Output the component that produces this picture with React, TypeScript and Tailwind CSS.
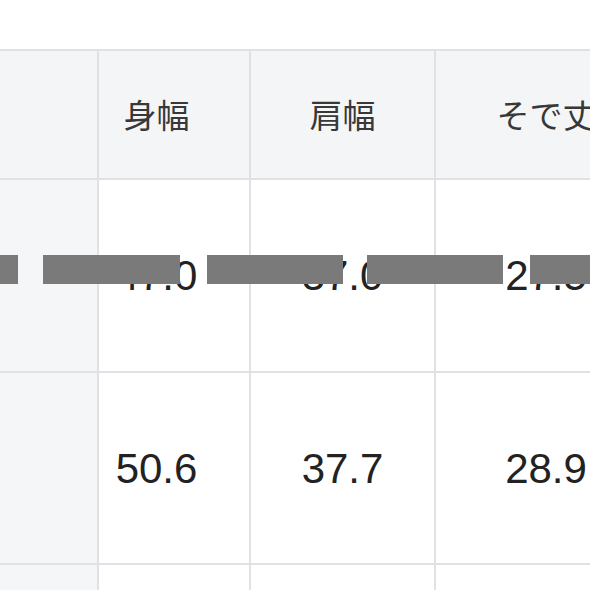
const headers = ["", "身幅", "肩幅", "そで丈"];
const rows = [
  { h: "h-[193px]", values: ["47.0", "37.0", "27.5"] },
  { h: "h-[192px]", values: ["50.6", "37.7", "28.9"] },
  { h: "h-[100px]", values: ["", "", ""] },
];

const cols = ["w-[99px]", "w-[152px]", "w-[185px]", "w-[222px]"];
const pads = ["", "pr-[35px]", "", ""];

// redaction bars over the first data row
const bars = [
  "left-0 w-[18px]",
  "left-[43px] w-[137px]",
  "left-[207px] w-[136px]",
  "left-[367px] w-[136px]",
  "left-[530px] w-[70px]",
];

export default function App() {
  return (
    <div className="relative h-[590px] w-[590px] overflow-hidden bg-white pt-[49px]">
      <div className="flex w-[658px] flex-col border-t-2 border-[#dfe1e4]">
        <div className="flex">
          {headers.map((t, i) => (
            <div
              key={i}
              className={`${cols[i]} ${pads[i]} flex h-[129px] shrink-0 items-center justify-center border-r-2 border-b-2 border-[#dfe1e4] bg-[#f4f5f7] text-[33px] text-[#383838] [font-family:'Noto_Sans_CJK_JP',sans-serif]`}
            >
              {t}
            </div>
          ))}
        </div>
        {rows.map((r, ri) => (
          <div key={ri} className="flex">
            <div
              className={`${cols[0]} ${r.h} shrink-0 border-r-2 border-b-2 border-[#dfe1e4] bg-[#f5f6f8]`}
            />
            {r.values.map((v, i) => (
              <div
                key={i}
                className={`${cols[i + 1]} ${pads[i + 1]} ${r.h} flex shrink-0 items-center justify-center border-r-2 border-b-2 border-[#dfe1e4] bg-white text-[42px] text-[#222] [font-family:'Liberation_Sans',Arial,sans-serif]`}
              >
                {v}
              </div>
            ))}
          </div>
        ))}
      </div>
      {bars.map((b, i) => (
        <div key={i} className={`absolute top-[255px] h-[29px] bg-[#7a7a7a] ${b}`} />
      ))}
    </div>
  );
}
